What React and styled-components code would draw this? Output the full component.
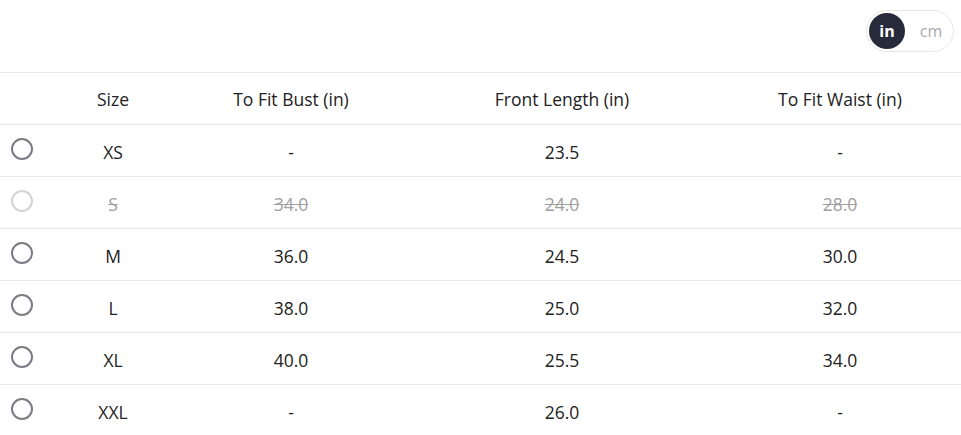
import React, { useState } from 'react';
import styled, { createGlobalStyle } from 'styled-components';

const GlobalStyle = createGlobalStyle`
    body {
        margin: 0;
        background: #fff;
        font-family: "Open Sans", "Noto Sans", sans-serif;
        color: #222;
    }
`;

const SWrap = styled.div`
    width: 961px;
`;

const STop = styled.div`
    height: 73px;
    display: flex;
    justify-content: flex-end;
    align-items: flex-start;
    padding: 10px 7px 0 0;
    box-sizing: border-box;
    border-bottom: 1px solid #e8e8e8;
`;

const SPill = styled.div`
    display: flex;
    align-items: center;
    width: 88px;
    height: 42px;
    box-sizing: border-box;
    border: 1px solid #e6e6e6;
    border-radius: 21px;
    padding: 0 2px;
`;

const SUnit = styled.button`
    width: 36px;
    height: 36px;
    border: none;
    border-radius: 50%;
    padding: 0;
    font-family: inherit;
    font-size: 16px;
    font-weight: ${props => props.active ? 700 : 400};
    background: ${props => props.active ? '#262a3b' : 'transparent'};
    color: ${props => props.active ? '#fff' : '#aaa'};
    margin-right: ${props => props.active ? '8px' : '0'};
    cursor: pointer;
`;

const STable = styled.table`
    width: 961px;
    border-collapse: collapse;
    table-layout: fixed;
`;

const STh = styled.th`
    height: 51px;
    font-weight: 400;
    font-size: 17.5px;
    color: #222;
    text-align: center;
    border-bottom: 1px solid #e8e8e8;
    padding: 0;
    width: ${props => props.w};
`;

const STd = styled.td`
    height: 49px;
    font-size: 17.5px;
    text-align: center;
    padding: 2px 0 0;
    color: ${props => props.off ? '#a0a0a0' : '#222'};
    text-decoration: ${props => props.off ? 'line-through' : 'none'};
    border-bottom: ${props => props.last ? 'none' : '1px solid #e8e8e8'};
`;

const SRadioCell = styled.td`
    padding: 0 0 4px 11px;
    text-align: left;
    border-bottom: ${props => props.last ? 'none' : '1px solid #e8e8e8'};
`;

const SRadio = styled.span`
    display: block;
    width: 22px;
    height: 22px;
    box-sizing: border-box;
    border-radius: 50%;
    border: 2px solid ${props => props.off ? '#d4d4d4' : '#7b7b84'};
`;

const rows = [
    ['XS', '-', '23.5', '-'],
    ['S', '34.0', '24.0', '28.0', true],
    ['M', '36.0', '24.5', '30.0'],
    ['L', '38.0', '25.0', '32.0'],
    ['XL', '40.0', '25.5', '34.0'],
    ['XXL', '-', '26.0', '-'],
];

const App = () => {
    const [unit, setUnit] = useState('in');
    return (
        <SWrap>
            <GlobalStyle />
            <STop>
                <SPill>
                    <SUnit active={unit === 'in'} onClick={() => setUnit('in')}>in</SUnit>
                    <SUnit active={unit === 'cm'} onClick={() => setUnit('cm')}>cm</SUnit>
                </SPill>
            </STop>
            <STable>
                <thead>
                    <tr>
                        <STh w="45px"></STh>
                        <STh w="136px">Size</STh>
                        <STh w="220px">To Fit Bust (in)</STh>
                        <STh w="322px">Front Length (in)</STh>
                        <STh w="234px">To Fit Waist (in)</STh>
                        <STh w="4px"></STh>
                    </tr>
                </thead>
                <tbody>
                    {rows.map((r, i) => {
                        const last = i === rows.length - 1;
                        return (
                            <tr key={i}>
                                <SRadioCell last={last}><SRadio off={r[4]} /></SRadioCell>
                                {r.slice(0, 4).map((v, j) => (
                                    <STd key={j} off={r[4]} last={last}>{v}</STd>
                                ))}
                                <STd last={last} />
                            </tr>
                        );
                    })}
                </tbody>
            </STable>
        </SWrap>
    );
};

export default App;
